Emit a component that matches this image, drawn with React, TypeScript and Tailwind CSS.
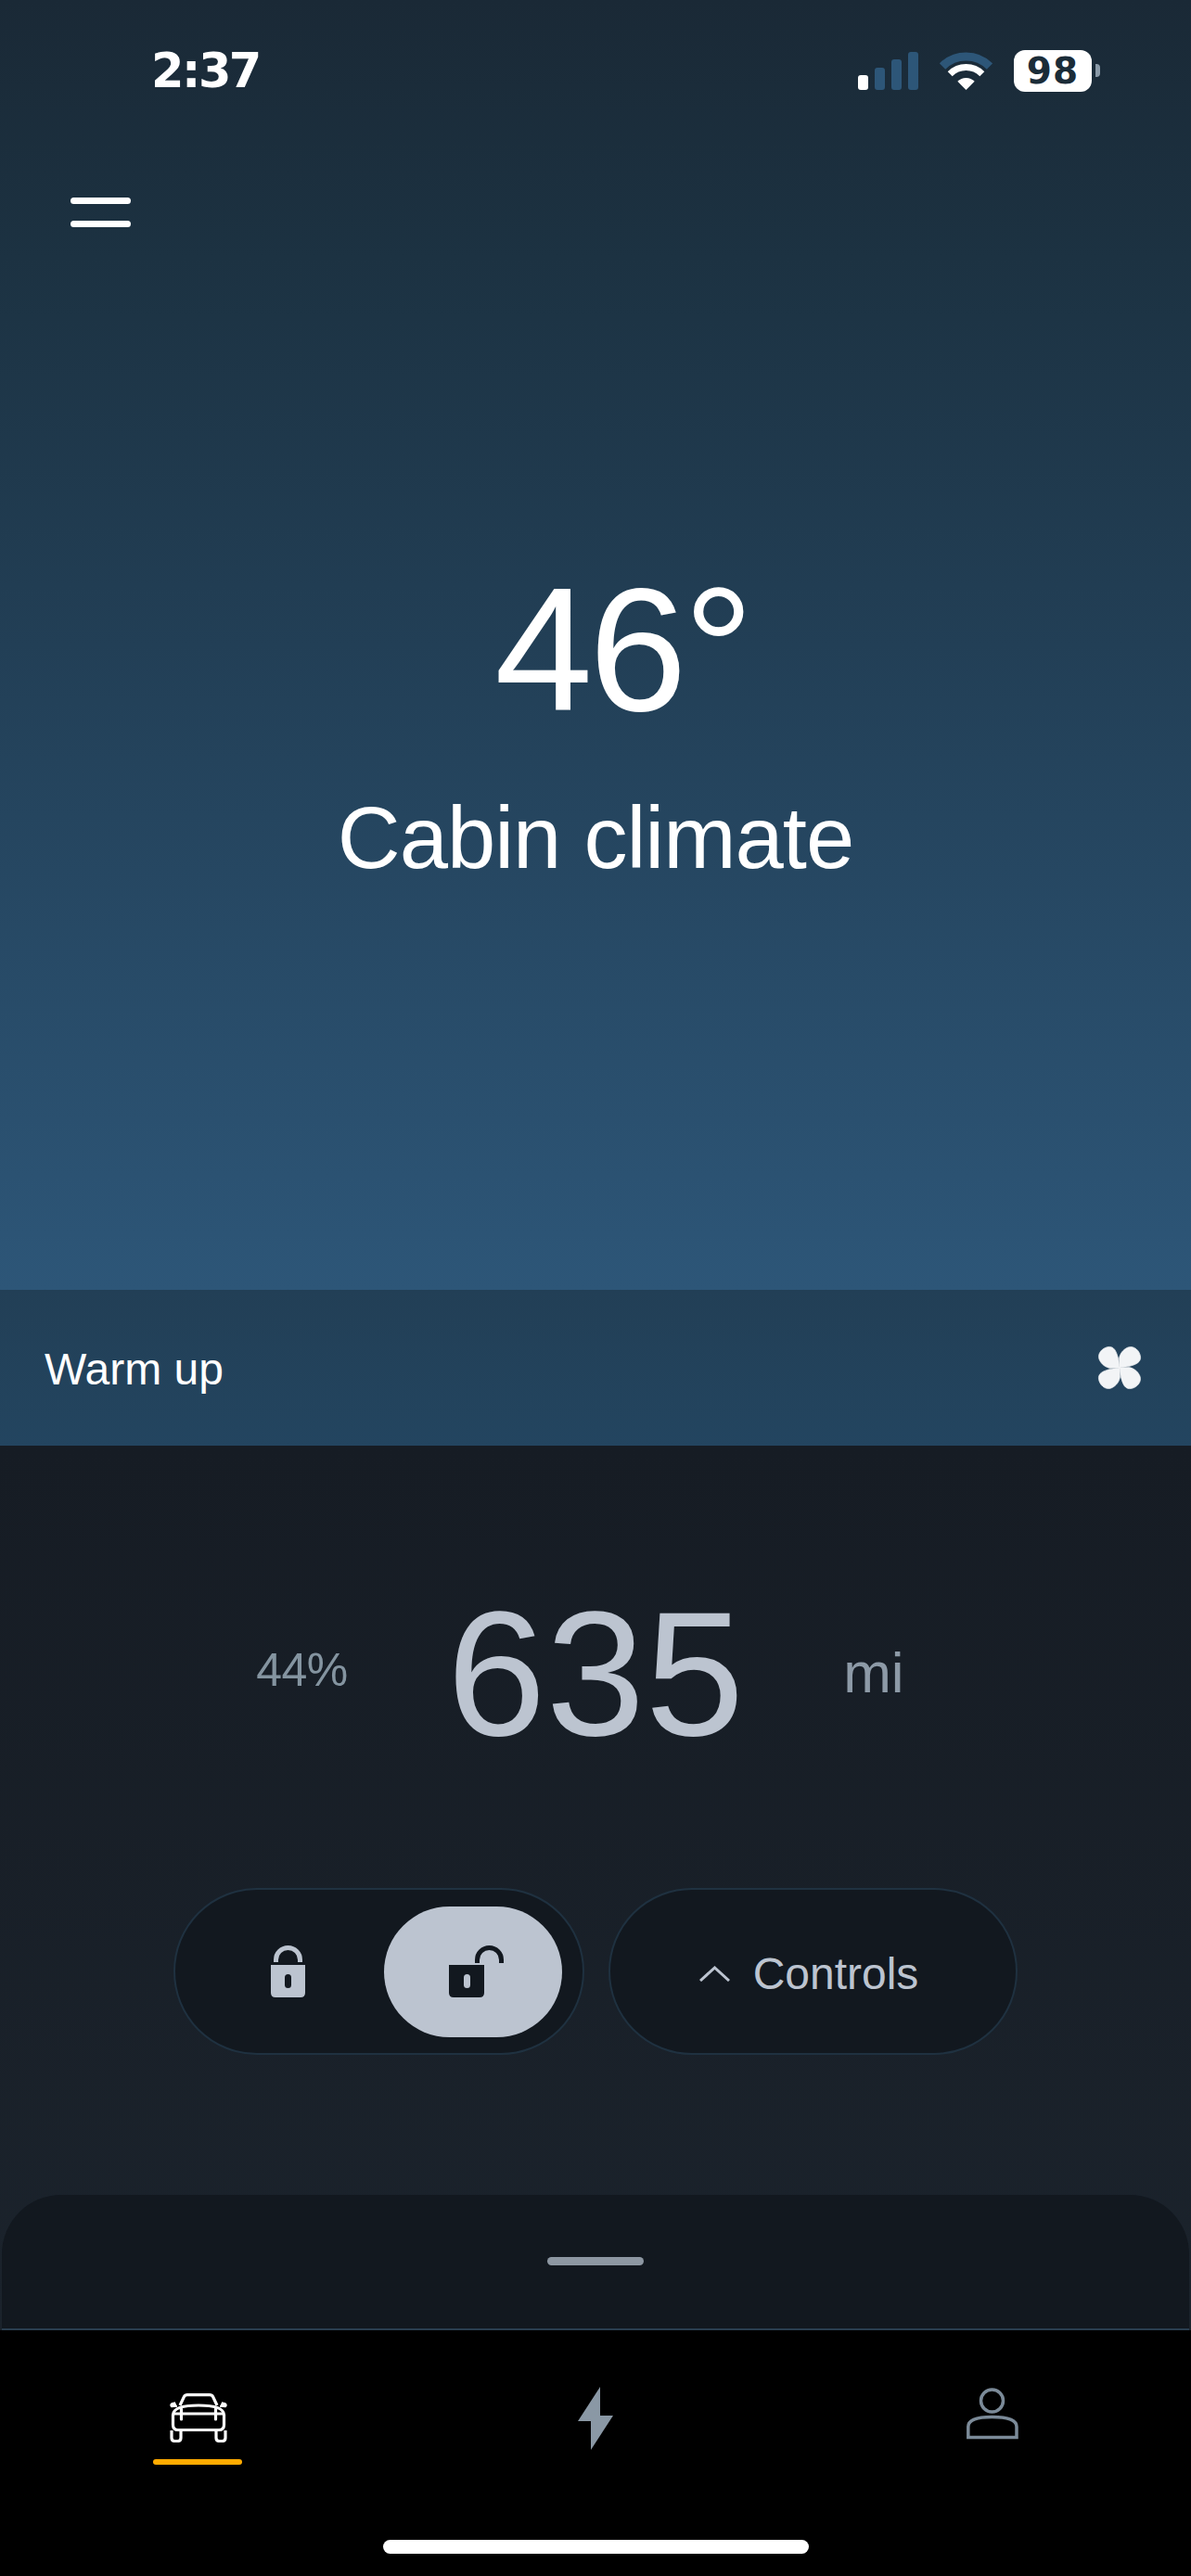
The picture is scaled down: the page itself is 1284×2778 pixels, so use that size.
function StatusBar() {
  return (
    <div className="flex h-[152px] items-center justify-between pl-[163px] pr-[98px]">
      <span className="font-['DejaVu_Sans',sans-serif] text-[51px] font-bold leading-none tracking-[-2.5px] text-white">2:37</span>
      <div className="flex items-center">
        <div className="flex h-[41px] items-end gap-[7px]">
          <div className="h-[16px] w-[11px] rounded-[3px] bg-white" />
          <div className="h-[24px] w-[11px] rounded-[3px] bg-[#2d5678]" />
          <div className="h-[33px] w-[11px] rounded-[3px] bg-[#2d5678]" />
          <div className="h-[41px] w-[11px] rounded-[3px] bg-[#2d5678]" />
        </div>
        <svg className="ml-[23px]" width="57" height="41" viewBox="0 0 57 41" fill="none">
          <path d="M3 15.5A36 36 0 0 1 54 15.5" stroke="#2d5678" strokeWidth="9" />
          <path d="M11.2 23.7A24.5 24.5 0 0 1 45.8 23.7" stroke="#fff" strokeWidth="7" />
          <path d="M28.5 41L19.3 31.8A13 13 0 0 1 37.7 31.8Z" fill="#fff" />
        </svg>
        <div className="ml-[23px] flex h-[45px] w-[84px] items-center justify-center rounded-[12px] bg-white">
          <span className="font-['DejaVu_Sans',sans-serif] text-[39px] font-bold leading-none tracking-[1px] text-[#1b2c38]">
            98
          </span>
        </div>
        <div className="ml-[4px] h-[14px] w-[5px] rounded-r-[4px] bg-[#8a9aa8]" />
      </div>
    </div>
  );
}

function Climate() {
  return (
    <div className="flex h-[1391px] flex-col bg-[linear-gradient(to_bottom,#1a2936_0%,#1c3242_20%,#223f56_50%,#2d5678_100%)]">
      <StatusBar />
      <div className="ml-[76px] mt-[61px] flex w-[65px] flex-col gap-[18px]">
        <div className="h-[7px] rounded-full bg-white" />
        <div className="h-[7px] rounded-full bg-white" />
      </div>
      <div className="mt-[360px] pl-[58px] text-center text-[190px] leading-none tracking-[-4px] text-white">46°</div>
      <div className="mt-[62px] text-center text-[94px] leading-none tracking-[-1px] text-white">Cabin climate</div>
    </div>
  );
}

function FanIcon() {
  const lobe = "M-10 -1C-14 -2 -19 -6 -20.5 -12C-22 -19 -15 -24 -9 -24C-3 -24 -1 -19 0 -10L0 0Z";
  return (
    <svg width="48" height="48" viewBox="-24 -24 48 48" fill="#f2f4f6" stroke="#f2f4f6" strokeWidth="0.6">
      <g transform="rotate(-8)">
        <path d={lobe} />
        <path d={lobe} transform="rotate(90)" />
        <path d={lobe} transform="rotate(180)" />
        <path d={lobe} transform="rotate(270)" />
      </g>
    </svg>
  );
}

function WarmUp() {
  return (
    <div className="flex h-[168px] items-center justify-between bg-[linear-gradient(to_bottom,#223f56,#234560)] pl-[48px] pr-[53px]">
      <span className="pt-[3px] text-[48px] leading-none text-white">Warm up</span>
      <FanIcon />
    </div>
  );
}

function LockIcon() {
  return (
    <svg width="37" height="56" viewBox="0 0 37 56" fill="none">
      <path d="M5.5 18V15.5A13 13 0 0 1 31.5 15.5V18" stroke="#bcc4d0" strokeWidth="5" />
      <path d="M0 21H37V51Q37 56 32 56H5Q0 56 0 51Z" fill="#bcc4d0" />
      <rect x="15" y="31" width="7" height="15" rx="3.5" fill="#12181f" />
    </svg>
  );
}

function UnlockIcon() {
  return (
    <svg width="59" height="56" viewBox="0 0 59 56" fill="none">
      <path d="M30.5 19V15.5A13 13 0 0 1 56.5 15.5V19" stroke="#12181f" strokeWidth="5" />
      <path d="M0 21H38V51Q38 56 33 56H5Q0 56 0 51Z" fill="#12181f" />
      <rect x="16" y="31" width="7" height="15" rx="3.5" fill="#bcc4d0" />
    </svg>
  );
}

function Range() {
  return (
    <div className="grid grid-cols-[1fr_auto_1fr] items-start pt-[150px]">
      <div className="mt-[67px] pr-[107px] text-right text-[50px] leading-none tracking-[-0.5px] text-[#8494a0]">44%</div>
      <div className="text-[192px] leading-none text-[#bcc4d0]">635</div>
      <div className="mt-[64px] pl-[107px] text-[62px] leading-none text-[#8d9aa7]">mi</div>
    </div>
  );
}

function Controls() {
  return (
    <div className="mt-[135px] flex justify-center gap-[26px]">
      <div className="flex h-[180px] w-[443px] items-center rounded-full border-2 border-[#1f3140] bg-[#12181f] pl-[17px] pr-[22px]">
        <div className="flex flex-1 justify-center">
          <LockIcon />
        </div>
        <div className="flex h-[141px] w-[192px] items-center justify-center rounded-full bg-[#bcc4d0] pb-[1px] pl-[6px]">
          <UnlockIcon />
        </div>
      </div>
      <div className="flex h-[180px] w-[441px] items-center justify-center gap-[25px] rounded-full border-2 border-[#1f3140] bg-[#12181f] pr-[9px] pt-[5px]">
        <svg width="33" height="17" viewBox="0 0 33 17" fill="none">
          <path d="M1 16L16.5 2L32 16" stroke="#bcc4d0" strokeWidth="3" />
        </svg>
        <span className="text-[48px] leading-none text-[#bcc4d0]">Controls</span>
      </div>
    </div>
  );
}

function Sheet() {
  return (
    <div className="mx-[2px] mt-auto flex h-[146px] justify-center rounded-t-[64px] border-b-2 border-[#2a3e4f] bg-[#12181f] pt-[67px]">
      <div className="h-[9px] w-[104px] rounded-full bg-[#8d97a2]" />
    </div>
  );
}

function CarIcon() {
  return (
    <svg width="62" height="53" viewBox="0 0 62 53" fill="none" stroke="#fff" strokeWidth="3.2">
      <path d="M11 13L15.5 3.5Q16.5 1.6 19 1.6H43Q45.5 1.6 46.5 3.5L51 13" />
      <path d="M3.5 23C4 16 14 13 31 13C48 13 58 16 58.5 23V34Q58.5 39.5 53 39.5H9Q3.5 39.5 3.5 34Z" />
      <path d="M3.5 22H58.5" />
      <path d="M12.5 17V28M49.5 17V28" strokeLinecap="round" />
      <path d="M2 40V48Q2 51.5 5.5 51.5H8.5Q12 51.5 12 48V41" />
      <path d="M50 41V48Q50 51.5 53.5 51.5H56.5Q60 51.5 60 48V40" />
      <path d="M8 14L2 14.5Q0 12.5 2 11L6 10M54 14L60 14.5Q62 12.5 60 11L56 10" fill="#fff" strokeWidth="1.5" />
    </svg>
  );
}

function NavBar() {
  return (
    <div className="flex h-[265px] flex-col bg-black">
      <div className="grid grid-cols-3 pt-[61px]">
        <div className="flex flex-col items-center pt-[7px]">
          <CarIcon />
          <div className="mt-[18px] h-[6px] w-[96px] -translate-x-[1px] rounded-full bg-[#ffab00]" />
        </div>
        <div className="flex justify-center">
          <svg width="38" height="68" viewBox="0 0 38 68" fill="#8a98a5">
            <path d="M24 0L0 37H14V68L38 31H24Z" />
          </svg>
        </div>
        <div className="flex justify-center pt-[1px]">
          <svg width="56" height="56" viewBox="0 0 56 56" fill="none" stroke="#7b8a98" strokeWidth="3.5">
            <circle cx="27.5" cy="14" r="12" />
            <path d="M1.8 53.5V42C1.8 34 14 31.5 27.5 31.5C41 31.5 54 34 54 42V53.5Z" />
          </svg>
        </div>
      </div>
      <div className="mx-auto mb-[24px] mt-auto h-[15px] w-[459px] rounded-full bg-white" />
    </div>
  );
}

export default function App() {
  return (
    <div className="flex h-[2778px] w-[1284px] flex-col overflow-hidden bg-black font-['Liberation_Sans',sans-serif]">
      <Climate />
      <WarmUp />
      <div className="flex h-[954px] flex-col bg-[linear-gradient(to_bottom,#161c24,#1b232c)]">
        <Range />
        <Controls />
        <Sheet />
      </div>
      <NavBar />
    </div>
  );
}
